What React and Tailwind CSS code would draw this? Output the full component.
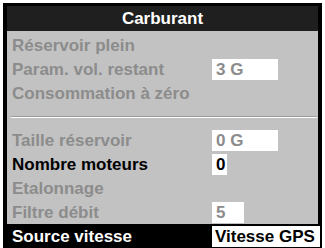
export default function App() {
  const Row = ({ label, value, w, labelColor = "text-[#8c8c8c]", valueColor = "text-[#8c8c8c]" }) => (
    <div className="flex h-6 items-center">
      <div className={`w-[205px] pl-[5px] ${labelColor}`}>{label}</div>
      {value !== undefined && (
        <div className={`flex h-[21px] items-center bg-white pl-[4px] ${valueColor}`} style={{ width: w }}>
          {value}
        </div>
      )}
    </div>
  );
  return (
    <div className="h-[248px] w-[325px] overflow-hidden bg-white pl-[3px] pt-[3px]" style={{ fontFamily: '"Liberation Sans", Arial, sans-serif' }}>
      <div className="h-[260px] w-[319px] border-x-4 border-t-[3px] border-black bg-[#c2c2c2] text-[17px] font-bold leading-none">
        <div className="flex h-[25px] items-center justify-center bg-[#1f1f1f] text-[17px] text-white">Carburant</div>
        <div className="pt-[2px]">
          <Row label="Réservoir plein" />
          <Row label="Param. vol. restant" value="3 G" w={66} />
          <Row label="Consommation à zéro" />
          <div className="flex h-[23px] items-center pl-[4px] pr-[1px]">
            <div className="h-[2px] w-full border-t border-[#9a9a9a] bg-white"></div>
          </div>
          <Row label="Taille réservoir" value="0 G" w={66} />
          <Row label="Nombre moteurs" value="0" w={15} labelColor="text-black" valueColor="text-black pl-[3px]" />
          <Row label="Etalonnage" />
          <Row label="Filtre débit" value="5" w={32} />
          <div className="flex h-6 items-center bg-black">
            <div className="w-[205px] pl-[5px] text-white">Source vitesse</div>
            <div className="-mr-[2px] flex h-[21px] w-[108px] items-center bg-white pl-[3px] text-black">Vitesse GPS</div>
          </div>
        </div>
      </div>
    </div>
  );
}
